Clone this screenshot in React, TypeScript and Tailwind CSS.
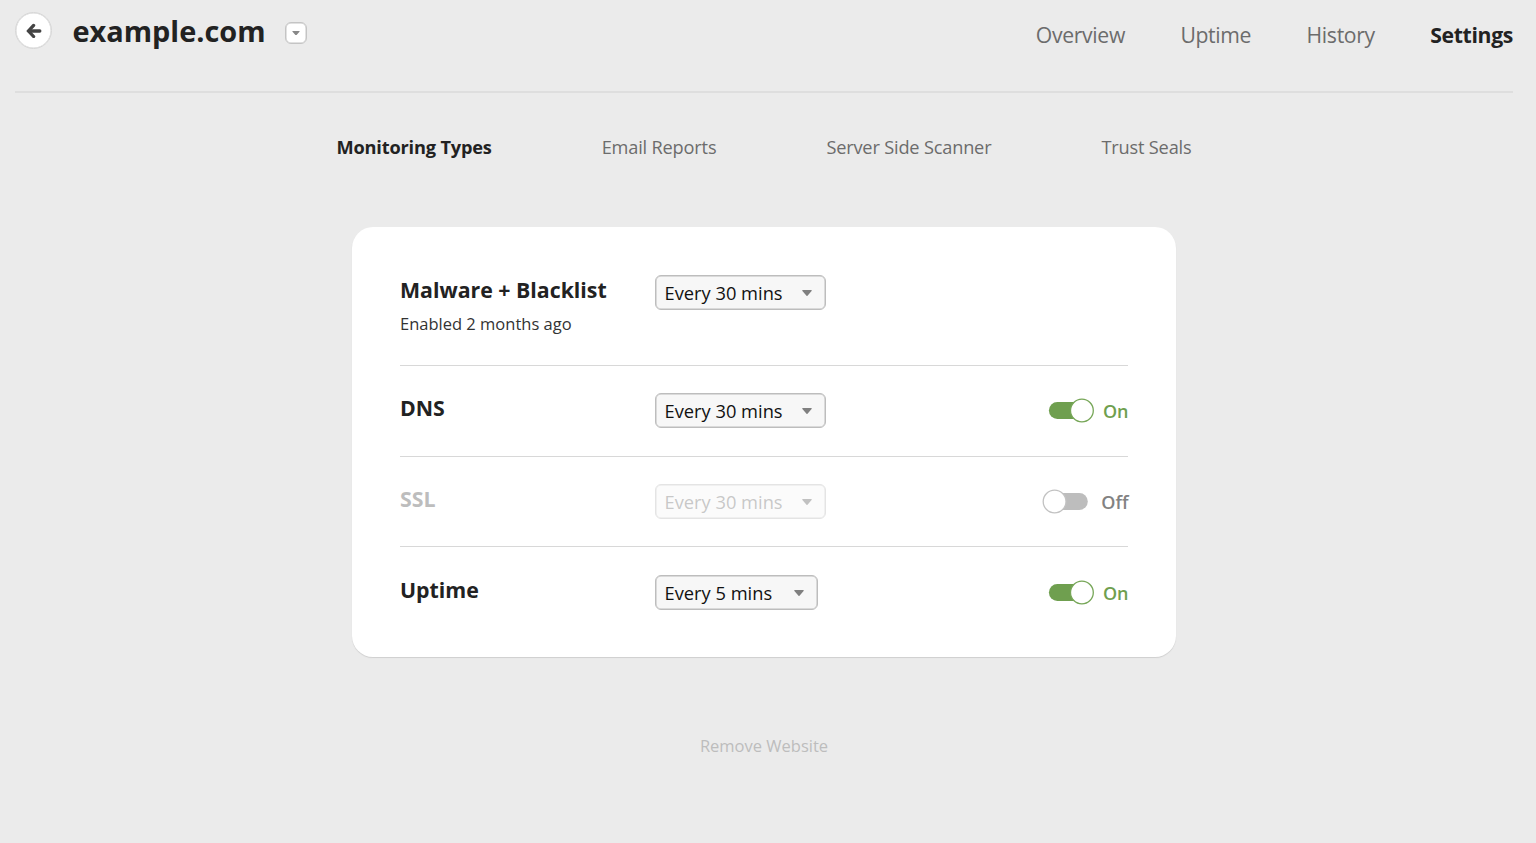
import React from "react";

const sections = ["Overview", "Uptime", "History", "Settings"];
const tabs = ["Monitoring Types", "Email Reports", "Server Side Scanner", "Trust Seals"];

function Caret({ className }: { className: string }) {
  return (
    <svg className={className} viewBox="0 0 10 6" fill="currentColor" aria-hidden="true">
      <path d="M0.8 0h8.4c.6 0 .8.6.4 1L5.5 5.7a.7.7 0 0 1-1 0L.4 1C0 .6.2 0 .8 0z" />
    </svg>
  );
}

function Frequency({ label, disabled = false, width }: { label: string; disabled?: boolean; width: string }) {
  return (
    <button
      disabled={disabled}
      className={`flex h-[35px] items-center justify-between rounded-[6px] border border-[#bdbdbd] bg-[#f7f7f7] pr-[13px] pl-[8.5px] text-[18.3px] text-[#111] shadow-[inset_0_0_0_0.5px_#bdbdbd] ${width} ${
        disabled ? "opacity-40" : ""
      }`}
    >
      <span className={`whitespace-nowrap ${disabled ? "text-[#777]" : ""}`}>{label}</span>
      <Caret className={`h-[6px] w-[10px] ${disabled ? "text-[#666]" : "text-[#808080]"}`} />
    </button>
  );
}

function Toggle({ on }: { on: boolean }) {
  return (
    <button
      className={`-mr-[0.5px] flex items-center text-[18px] font-semibold ${on ? "text-[#6f9f4f]" : "text-[#828282]"}`}
      aria-pressed={on}
    >
      <svg className={`h-[26px] w-[46px] ${on ? "mr-[9px]" : "mr-[13px]"}`} viewBox="0 0 46 26" aria-hidden="true">
        {on ? (
          <>
            <rect x="0.9" y="4" width="40" height="17" rx="8.5" fill="#6f9f4f" />
            <circle cx="33.9" cy="12.5" r="11.4" fill="#fff" stroke="#76a657" strokeWidth="1.3" />
          </>
        ) : (
          <>
            <rect x="5" y="4" width="40.8" height="17" rx="8.5" fill="#bdbdbd" />
            <circle cx="12.6" cy="12.5" r="11.4" fill="#fff" stroke="#c2c2c2" strokeWidth="1.3" />
          </>
        )}
      </svg>
      {on ? "On" : "Off"}
    </button>
  );
}

function Row({
  name,
  every,
  on,
  width,
  className,
}: {
  name: string;
  every: string;
  on: boolean;
  width: string;
  className: string;
}) {
  return (
    <div className={`flex items-start ${className}`}>
      <h2
        className={`-mt-px w-[255px] text-[21.3px] leading-[32px] font-bold ${on ? "text-[#222]" : "text-[#bdbdbd]"}`}
      >
        {name}
      </h2>
      <Frequency label={every} disabled={!on} width={width} />
      <div className="ml-auto flex h-[36px] items-center">
        <Toggle on={on} />
      </div>
    </div>
  );
}

export default function App() {
  return (
    <div className="h-[843px] overflow-hidden bg-[#ebebeb] pr-[23px] pl-[15px] font-['Open_Sans',sans-serif] text-[#222]">
      <header className="flex h-[93px] items-start border-b-2 border-[#dedede]">
        <button
          aria-label="Back"
          className="mt-[12px] flex size-[37px] items-center justify-center rounded-full border border-[#d6d6d6] bg-white shadow-[inset_0_0_0_0.5px_#d6d6d6]"
        >
          <svg className="h-[15px] w-[16px]" viewBox="0 0 16 15" fill="none" stroke="#444" strokeWidth="3.3" aria-hidden="true">
            <path d="M7.6 2.4 2.5 8l5.1 5.5" strokeLinecap="round" />
            <path d="M3 8h10.8" strokeLinecap="round" />
          </svg>
        </button>
        <h1 className="mt-[10px] ml-[20.5px] w-[193px] text-[28.9px] leading-[42px] font-bold">example.com</h1>
        <button
          aria-label="Choose website"
          className="mt-[22px] ml-[19.5px] flex size-[22px] items-center justify-center rounded-[6px] border border-[#c4c4c4] bg-white text-[#888] shadow-[inset_0_0_0_0.5px_#c4c4c4]"
        >
          <Caret className="h-[4.5px] w-[8px]" />
        </button>
        <nav className="mt-[19px] ml-auto flex gap-[55.4px] text-[21.2px] leading-[32px] tracking-[-0.34px] text-[#6c6c6c]">
          {sections.map((s) => (
            <a key={s} className={s === "Settings" ? "font-bold text-[#222]" : ""}>
              {s}
            </a>
          ))}
        </nav>
      </header>

      <nav className="mt-[40px] flex justify-center gap-[110px] text-[18.2px] leading-[28px] tracking-[-0.18px] text-[#6c6c6c]">
        {tabs.map((t, i) => (
          <a key={t} className={i === 0 ? "font-bold text-[#222]" : ""}>
            {t}
          </a>
        ))}
      </nav>

      <main className="mx-auto mt-[66px] h-[430px] w-[824px] rounded-[21px] bg-white px-[48px] shadow-[0_1px_1px_#cfcfcf]">
        <div className="flex h-[139px] items-start border-b border-[#d8d8d8] pt-[48px]">
          <div className="w-[255px]">
            <h2 className="-mt-px text-[21.3px] leading-[32px] font-bold">Malware + Blacklist</h2>
            <p className="mt-[6px] text-[16.5px] leading-[24px] text-[#333]">Enabled 2 months ago</p>
          </div>
          <Frequency label="Every 30 mins" width="w-[171px]" />
        </div>
        <Row name="DNS" every="Every 30 mins" on width="w-[171px]" className="h-[91px] border-b border-[#d8d8d8] pt-[27px]" />
        <Row
          name="SSL"
          every="Every 30 mins"
          on={false}
          width="w-[171px]"
          className="h-[90px] border-b border-[#d8d8d8] pt-[27px]"
        />
        <Row name="Uptime" every="Every 5 mins" on width="w-[163px]" className="h-[110px] pt-[28px]" />
      </main>

      <div className="mt-[77px] text-center text-[16.5px] leading-[24px] text-[#bdbdbd]">
        <button>Remove Website</button>
      </div>
    </div>
  );
}
